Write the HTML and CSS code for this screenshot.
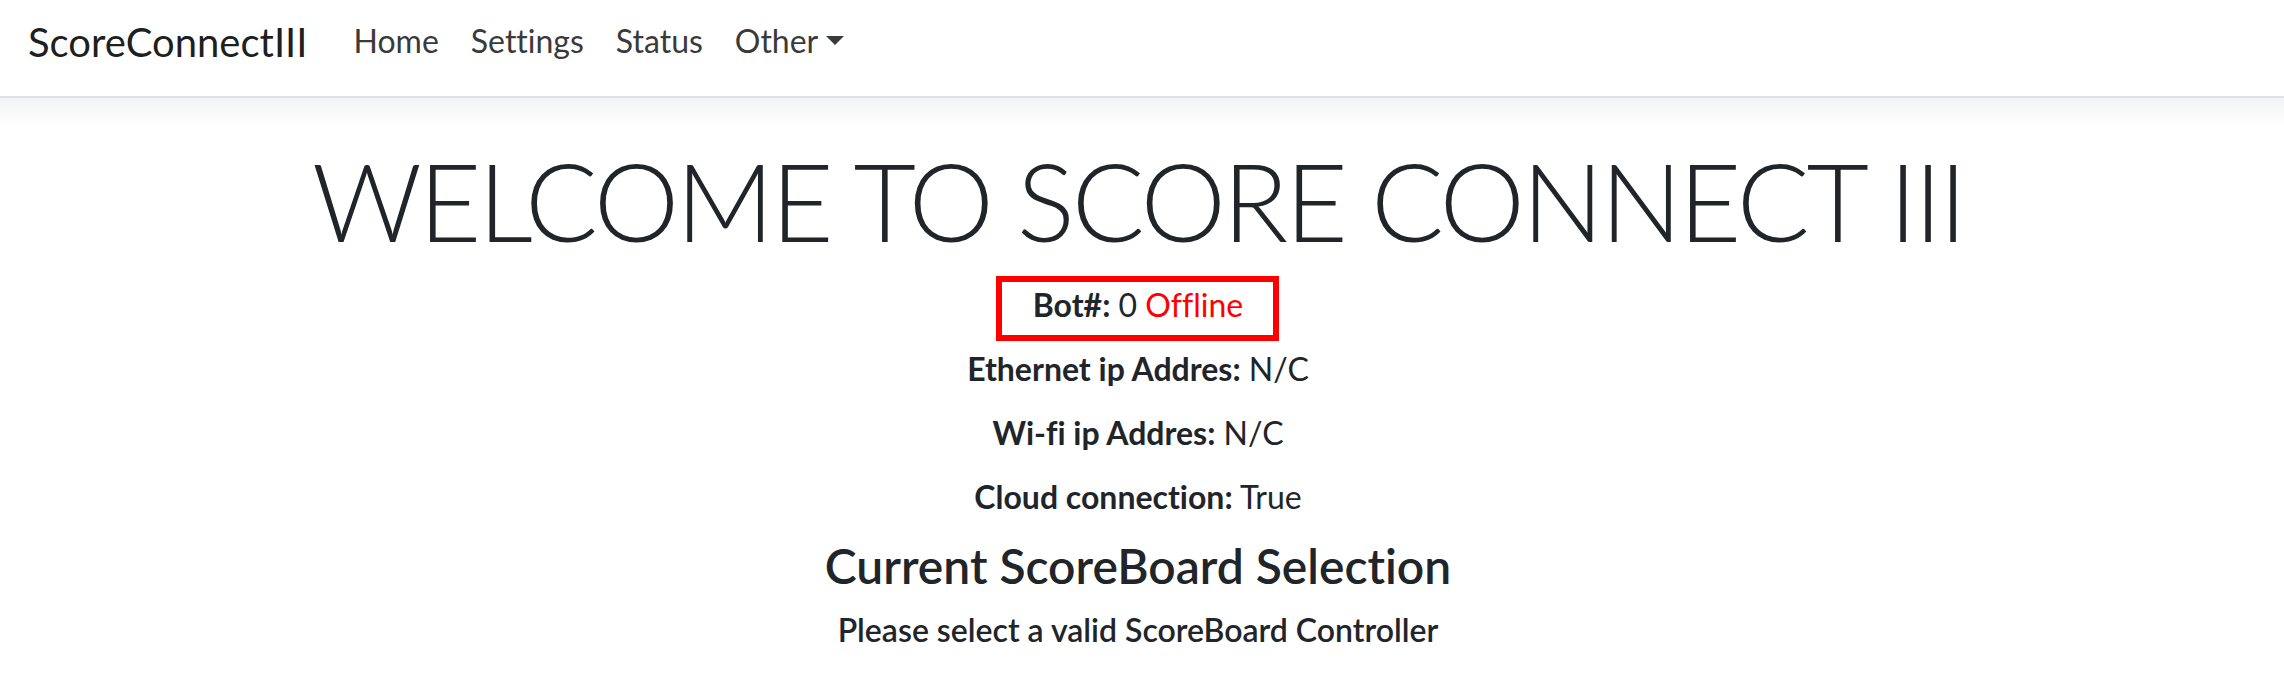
FILE: index.html
```html
<!DOCTYPE html>
<html lang="en">
<head>
<meta charset="utf-8">
<title>ScoreConnectIII</title>
<link rel="stylesheet" href="styles.css">
</head>
<body>
<nav class="navbar">
  <a class="brand" href="#">ScoreConnectIII</a>
  <ul class="nav">
    <li><a class="nav-link" href="#">Home</a></li>
    <li><a class="nav-link" href="#">Settings</a></li>
    <li><a class="nav-link" href="#">Status</a></li>
    <li><a class="nav-link dropdown-toggle" href="#">Other</a></li>
  </ul>
</nav>
<main class="main">
  <h1 class="display">WELCOME TO SCORE CONNECT III</h1>
  <p class="info"><span class="boxed"><b>Bot#:</b> 0 <span class="offline">Offline</span></span></p>
  <p class="info"><b>Ethernet ip Addres:</b> N/C</p>
  <p class="info"><b>Wi-fi ip Addres:</b> N/C</p>
  <p class="info"><b>Cloud connection:</b> True</p>
  <h4 class="section">Current ScoreBoard Selection</h4>
  <h6 class="sub">Please select a valid ScoreBoard Controller</h6>
</main>
</body>
</html>
```
FILE: styles.css
```css
html, body {
  margin: 0;
  padding: 0;
  background: #fff;
}
body {
  font-family: Lato, "Open Sans", sans-serif;
  font-variant-ligatures: none;
  color: #212529;
}
.navbar {
  display: flex;
  align-items: center;
  height: 83px;
  padding: 0 28px 13px 28px;
  background: #fff;
  border-bottom: 2px solid #dee2e6;
}
.brand {
  font-size: 40px;
  color: rgba(0, 0, 0, 0.9);
  text-decoration: none;
  line-height: 1.2;
  margin-right: 30px;
}
.nav {
  display: flex;
  list-style: none;
  margin: 0;
  padding: 0;
}
.nav-link {
  display: block;
  font-size: 32px;
  line-height: 1.2;
  padding: 0 16px;
  color: #3a3a3a;
  text-decoration: none;
}
.dropdown-toggle::after {
  content: "";
  display: inline-block;
  margin-left: 8px;
  vertical-align: 8px;
  border-top: 9px solid #3a3a3a;
  border-left: 9px solid transparent;
  border-right: 9px solid transparent;
}
.main {
  text-align: center;
  padding: 38px 8px 40px 0;
  background: linear-gradient(#f2f3f4, #fff 30px) no-repeat;
}
.display {
  margin: 0 0 15px 0;
  font-size: 108px;
  font-weight: 300;
  line-height: 1.2;
  letter-spacing: -3.1px;
}
.info {
  margin: 0 0 16px 0;
  font-size: 32px;
  line-height: 48px;
}
.info b {
  font-weight: 700;
}
.boxed {
  position: relative;
  display: inline-block;
}
.boxed::after {
  content: "";
  position: absolute;
  top: -5px;
  bottom: -12px;
  left: -37px;
  right: -36px;
  border: 6px solid #ff0000;
}
.offline {
  color: #ff0000;
}
.section {
  margin: 0 0 17px 0;
  font-size: 48px;
  font-weight: 600;
  line-height: 1.2;
}
.sub {
  margin: 0;
  font-size: 32px;
  font-weight: 600;
  line-height: 1.2;
}
```
